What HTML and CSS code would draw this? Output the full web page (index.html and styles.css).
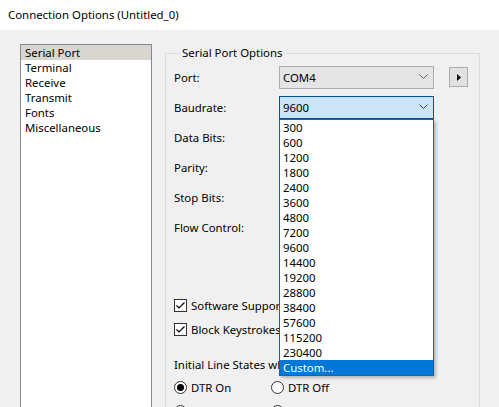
FILE: index.html
```html
<!DOCTYPE html>
<html lang="en">

<head>
  <meta charset="UTF-8">
  <title>Connection Options</title>
  <link rel="stylesheet" href="styles.css">
</head>

<body>
  <div class="title-bar">Connection Options (Untitled_0)</div>

  <div class="dialog">
    <!-- page list -->
    <ul class="page-list">
      <li class="selected">Serial Port</li>
      <li>Terminal</li>
      <li>Receive</li>
      <li>Transmit</li>
      <li>Fonts</li>
      <li>Miscellaneous</li>
    </ul>

    <fieldset class="group">
      <legend>Serial Port Options</legend>

      <div class="field-grid">
        <label>Port:</label>
        <div class="combo">
          <span>COM4</span>
          <svg class="chevron" width="9" height="6" viewBox="0 0 9 6"><polyline points="0.5,0.5 4.5,4.5 8.5,0.5" fill="none" stroke="#606060" stroke-width="1"/></svg>
        </div>
        <button class="arrow-btn"><svg width="4" height="7" viewBox="0 0 4 7"><polygon points="0,0 4,3.5 0,7" fill="#000"/></svg></button>

        <label>Baudrate:</label>
        <div class="combo focused">
          <span>9600</span>
          <svg class="chevron" width="9" height="6" viewBox="0 0 9 6"><polyline points="0.5,0.5 4.5,4.5 8.5,0.5" fill="none" stroke="#404040" stroke-width="1"/></svg>
          <!-- open dropdown -->
          <ul class="drop-list">
            <li>300</li>
            <li>600</li>
            <li>1200</li>
            <li>1800</li>
            <li>2400</li>
            <li>3600</li>
            <li>4800</li>
            <li>7200</li>
            <li>9600</li>
            <li>14400</li>
            <li>19200</li>
            <li>28800</li>
            <li>38400</li>
            <li>57600</li>
            <li>115200</li>
            <li>230400</li>
            <li class="hover">Custom...</li>
          </ul>
        </div>
        <span></span>

        <label>Data Bits:</label><span></span><span></span>
        <label>Parity:</label><span></span><span></span>
        <label>Stop Bits:</label><span></span><span></span>
        <label>Flow Control:</label><span></span><span></span>
      </div>

      <!-- texts below are hidden under the open dropdown -->
      <div class="checks">
        <div class="check-row">
          <svg width="13" height="13" viewBox="0 0 13 13"><rect x="0.5" y="0.5" width="12" height="12" fill="#fff" stroke="#333"/><polyline points="2.5,6.5 5,9 10.5,3.5" fill="none" stroke="#000" stroke-width="1.2"/></svg>
          <span class="clip">Software Supported Flow Control</span>
        </div>
        <div class="check-row">
          <svg width="13" height="13" viewBox="0 0 13 13"><rect x="0.5" y="0.5" width="12" height="12" fill="#fff" stroke="#333"/><polyline points="2.5,6.5 5,9 10.5,3.5" fill="none" stroke="#000" stroke-width="1.2"/></svg>
          <span class="clip">Block Keystrokes while Flow Halted</span>
        </div>
      </div>

      <div class="line-title"><span class="clip wide">Initial Line States when Port Opened</span></div>

      <div class="radio-grid">
        <div class="radio-row"><span class="radio checked"></span>DTR On</div>
        <div class="radio-row"><span class="radio"></span>DTR Off</div>
        <div class="radio-row"><span class="radio"></span>RTS On</div>
        <div class="radio-row"><span class="radio"></span>RTS Off</div>
      </div>
    </fieldset>
  </div>
</body>

</html>
```

FILE: styles.css
```css
* {
  margin: 0;
  padding: 0;
  box-sizing: border-box;
  font-family: "Noto Sans", sans-serif;
  font-size: 11.4px;
  color: #000;
}

body {
  background-color: #f0f0f0;
  overflow: hidden;
  height: 407px;
}

.title-bar {
  background-color: white;
  height: 30px;
  line-height: 30px;
  padding-left: 8px;
}

.dialog {
  display: flex;
  align-items: flex-start;
  gap: 13px;
  padding: 14px 0 0 20px;
  height: 377px;
  overflow: hidden;
}

/* left list */
.page-list {
  list-style: none;
  width: 132px;
  height: 420px;
  background-color: white;
  border: 1px solid #828790;
  flex-shrink: 0;
}

.page-list li {
  line-height: 15px;
  padding-left: 4px;
}

.page-list li.selected {
  background-color: #d9d6d1;
}

/* group box */
.group {
  margin-top: 1px;
  width: 315px;
  height: 420px;
  border: 1px solid #dcdcdc;
  padding: 1px 0 0 8px;
  flex-shrink: 0;
}

.group legend {
  margin-left: 6px;
  padding: 0 2px;
  line-height: 16px;
}

.field-grid {
  display: grid;
  grid-template-columns: 105px 155px 34px;
  grid-auto-rows: 30px;
  align-items: center;
}

.combo {
  position: relative;
  height: 23px;
  display: flex;
  align-items: center;
  justify-content: space-between;
  padding: 0 5px 0 3px;
  background-color: #e5e5e5;
  border: 1px solid #adadad;
}

.combo.focused {
  background-color: #cce4f7;
  border-color: #005499;
}

.chevron {
  display: block;
}

.arrow-btn {
  margin-left: 15px;
  width: 19px;
  height: 20px;
  background-color: #e1e1e1;
  border: 1px solid #adadad;
  display: flex;
  align-items: center;
  justify-content: center;
}

/* dropdown list */
.drop-list {
  position: absolute;
  top: calc(100% + 1px);
  left: -1px;
  width: 155px;
  list-style: none;
  background-color: white;
  border: 1px solid #1c63a6;
  box-shadow: 2px 2px 3px rgba(0, 0, 0, 0.25);
  z-index: 1;
}

.drop-list li {
  line-height: 15px;
  padding-left: 3px;
}

.drop-list li.hover {
  background-color: #0078d7;
  color: white;
}

/* checkboxes */
.checks {
  margin-top: 51px;
}

.check-row {
  height: 24px;
  display: flex;
  align-items: center;
  gap: 4px;
  white-space: nowrap;
}

.check-row svg {
  flex-shrink: 0;
}

.clip {
  display: block;
  max-width: 88px;
  overflow: hidden;
  white-space: nowrap;
}

.clip.wide {
  max-width: 105px;
}

.line-title {
  margin-top: 14px;
  height: 20px;
  line-height: 20px;
}

/* radios */
.radio-grid {
  display: grid;
  grid-template-columns: 97px 120px;
  grid-auto-rows: 24px;
  align-items: center;
}

.radio-row {
  display: flex;
  align-items: center;
  gap: 4px;
}

.radio {
  width: 13px;
  height: 13px;
  border: 1px solid #333;
  border-radius: 50%;
  background-color: white;
  display: flex;
  align-items: center;
  justify-content: center;
}

.radio.checked::after {
  content: "";
  width: 7px;
  height: 7px;
  border-radius: 50%;
  background-color: #000;
}
```
